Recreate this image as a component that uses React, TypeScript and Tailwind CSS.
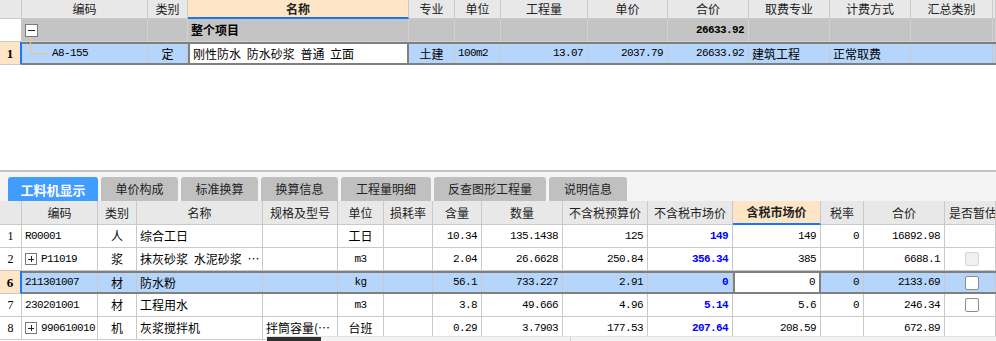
import React from "react";

const MONO = "font-['Liberation_Mono',monospace] text-[11px] tracking-[-0.6px]";

type Align = "l" | "c" | "r";

function Cell({
  children,
  a = "c",
  noB = false,
  cls = "",
}: {
  children?: React.ReactNode;
  a?: Align;
  noB?: boolean;
  cls?: string;
}) {
  const al = a === "l" ? "justify-start pl-[3px]" : a === "r" ? "justify-end pr-[4px]" : "justify-center";
  return (
    <div
      className={`flex items-center overflow-hidden whitespace-nowrap border-r border-[#c9c9c9] ${noB ? "" : "border-b"} ${al} ${cls}`}
    >
      {children}
    </div>
  );
}

const M = ({ children, cls = "" }: { children: React.ReactNode; cls?: string }) => (
  <span className={`${MONO} ${cls}`}>{children}</span>
);

const B = ({ children }: { children: React.ReactNode }) => (
  <span className="font-['Liberation_Mono',monospace] text-[11px] tracking-[-0.6px] font-bold text-[#0000ff]">{children}</span>
);

function PlusBox() {
  return (
    <span className="relative mr-[4px] inline-block h-[12px] w-[12px] shrink-0 border border-[#7a7a7a] bg-white">
      <span className="absolute left-[2px] top-[5px] h-[1px] w-[6px] bg-[#222]" />
      <span className="absolute left-[5px] top-[2px] h-[6px] w-[1px] bg-[#222]" />
    </span>
  );
}

function MinusBox() {
  return (
    <span className="relative inline-block h-[13px] w-[13px] shrink-0 border border-[#7a7a7a] bg-white">
      <span className="absolute left-[2px] top-[5px] h-[1px] w-[7px] bg-[#222]" />
    </span>
  );
}

function Check({ disabled = false }: { disabled?: boolean }) {
  return (
    <span
      className={`inline-block h-[14px] w-[14px] rounded-[2px] border ${disabled ? "border-[#d6d6d6] bg-[#f0f0f0]" : "border-[#8c8c8c] bg-white"}`}
    />
  );
}

const TOP_COLS = "grid-cols-[126px_40px_221px_46px_46px_87px_80px_81px_81px_81px_82px_1fr]";
const BOT_COLS = "grid-cols-[76px_39px_126px_75px_46px_49px_49px_81px_85px_85px_88px_43px_81px_1fr]";

function TopTable() {
  return (
    <div className="relative">
      {/* header */}
      <div className="flex h-[19px] bg-[#e8e8e8] text-[12px] text-[#222]">
        <div className="w-[22px] shrink-0 border-r border-b border-[#c9c9c9]" />
        <div className={`grid flex-1 ${TOP_COLS}`}>
          <Cell>编码</Cell>
          <Cell>类别</Cell>
          <Cell cls="bg-[#fde5c6] font-bold border-b-2 border-b-[#1677ff]">名称</Cell>
          <Cell>专业</Cell>
          <Cell>单位</Cell>
          <Cell>工程量</Cell>
          <Cell>单价</Cell>
          <Cell>合价</Cell>
          <Cell>取费专业</Cell>
          <Cell>计费方式</Cell>
          <Cell>汇总类别</Cell>
          <Cell />
        </div>
      </div>
      {/* group row */}
      <div className="flex h-[23px] text-[12px] text-black">
        <div className="w-[22px] shrink-0 border-r border-b border-[#c9c9c9] bg-white" />
        <div className={`grid flex-1 bg-[#c4c4c4] ${TOP_COLS}`}>
          <Cell a="l" cls="border-[#d2d2d2] pl-[2px]">
            <MinusBox />
          </Cell>
          <Cell cls="border-[#d2d2d2]" />
          <Cell a="l" cls="border-[#d2d2d2] font-bold">整个项目</Cell>
          <Cell cls="border-[#d2d2d2]" />
          <Cell cls="border-[#d2d2d2]" />
          <Cell cls="border-[#d2d2d2]" />
          <Cell cls="border-[#d2d2d2]" />
          <Cell a="r" cls="border-[#d2d2d2]">
            <span className="font-['Liberation_Mono',monospace] text-[11px] tracking-[-0.6px] font-bold">26633.92</span>
          </Cell>
          <Cell cls="border-[#d2d2d2]" />
          <Cell cls="border-[#d2d2d2]" />
          <Cell cls="border-[#d2d2d2]" />
          <Cell cls="border-[#d2d2d2]" />
        </div>
      </div>
      {/* row 1 selected */}
      <div className="flex h-[23px] text-[12px] text-black">
        <div className="flex w-[22px] shrink-0 items-center justify-center border-b border-r-2 border-[#c9c9c9] border-r-[#1677ff] bg-[#fde5c6] font-['Liberation_Serif',serif] text-[13px] font-bold">
          1
        </div>
        <div className={`grid flex-1 border-y-2 border-[#7f7f7f] bg-[#b5d5fb] ${TOP_COLS}`}>
          <Cell a="l" noB cls="pl-[30px]">
            <M>A8-155</M>
          </Cell>
          <Cell noB>定</Cell>
          <Cell a="l" noB cls="bg-white border-l-2 border-l-[#808080] border-r-2 border-r-[#808080] pl-[1px] [word-spacing:3px]">
            刚性防水 防水砂浆 普通 立面
          </Cell>
          <Cell noB>土建</Cell>
          <Cell a="l" noB>
            <M>100m2</M>
          </Cell>
          <Cell a="r" noB>
            <M>13.07</M>
          </Cell>
          <Cell a="r" noB>
            <M>2037.79</M>
          </Cell>
          <Cell a="r" noB>
            <M>26633.92</M>
          </Cell>
          <Cell a="l" noB>建筑工程</Cell>
          <Cell a="l" noB>正常取费</Cell>
          <Cell noB />
          <Cell noB />
        </div>
      </div>
      {/* tree connector */}
      <div className="absolute left-[30px] top-[37px] h-[16px] w-[1px] bg-[#f5c07c]" />
      <div className="absolute left-[30px] top-[53px] h-[1px] w-[19px] bg-[#f5c07c]" />
    </div>
  );
}

type Row = {
  n: string;
  code: string;
  plus?: boolean;
  type: string;
  name: string;
  spec?: string;
  unit: string;
  unitMono?: boolean;
  hl: string;
  sl: string;
  ys: string;
  sc: string;
  hs: string;
  rate: string;
  total: string;
  check?: "none" | "dis" | "on";
  sel?: boolean;
};

const rows: Row[] = [
  { n: "1", code: "R00001", type: "人", name: "综合工日", unit: "工日", hl: "10.34", sl: "135.1438", ys: "125", sc: "149", hs: "149", rate: "0", total: "16892.98", check: "none" },
  { n: "2", code: "P11019", plus: true, type: "浆", name: "抹灰砂浆 水泥砂浆 …", unit: "m3", unitMono: true, hl: "2.04", sl: "26.6628", ys: "250.84", sc: "356.34", hs: "385", rate: "", total: "6688.1", check: "dis" },
  { n: "6", code: "211301007", type: "材", name: "防水粉", unit: "kg", unitMono: true, hl: "56.1", sl: "733.227", ys: "2.91", sc: "0", hs: "0", rate: "0", total: "2133.69", check: "on", sel: true },
  { n: "7", code: "230201001", type: "材", name: "工程用水", unit: "m3", unitMono: true, hl: "3.8", sl: "49.666", ys: "4.96", sc: "5.14", hs: "5.6", rate: "0", total: "246.34", check: "on" },
  { n: "8", code: "990610010", plus: true, type: "机", name: "灰浆搅拌机", spec: "拌筒容量(…", unit: "台班", hl: "0.29", sl: "3.7903", ys: "177.53", sc: "207.64", hs: "208.59", rate: "", total: "672.89", check: "none" },
];

function BottomTable() {
  return (
    <div>
      <div className="flex h-[24px] bg-[#e8e8e8] text-[12px] text-[#222]">
        <div className="w-[22px] shrink-0 border-r border-b border-[#c9c9c9]" />
        <div className={`grid flex-1 ${BOT_COLS}`}>
          <Cell>编码</Cell>
          <Cell>类别</Cell>
          <Cell>名称</Cell>
          <Cell>规格及型号</Cell>
          <Cell>单位</Cell>
          <Cell>损耗率</Cell>
          <Cell>含量</Cell>
          <Cell>数量</Cell>
          <Cell>不含税预算价</Cell>
          <Cell>不含税市场价</Cell>
          <Cell cls="bg-[#fde5c6] font-bold border-b-2 border-b-[#1677ff]">含税市场价</Cell>
          <Cell>税率</Cell>
          <Cell>合价</Cell>
          <Cell a="l" cls="pl-[4px]">是否暂估</Cell>
        </div>
      </div>
      {rows.map((r) => {
        const s = !!r.sel;
        return (
          <div key={r.n} className="flex h-[23px] text-[12px] text-black">
            <div
              className={`flex w-[22px] shrink-0 items-center justify-center border-b border-[#c9c9c9] font-['Liberation_Serif',serif] ${s ? "border-r-2 border-r-[#1677ff] bg-[#fde5c6] text-[13px] font-bold" : "border-r bg-white text-[12px]"}`}
            >
              {r.n}
            </div>
            <div className={`grid flex-1 ${BOT_COLS} ${s ? "border-y-2 border-[#7f7f7f] bg-[#b5d5fb]" : "bg-white"}`}>
              <Cell a="l" noB={s} cls="pl-[2px]">
                {r.plus && <PlusBox />}
                <M>{r.code}</M>
              </Cell>
              <Cell noB={s}>{r.type}</Cell>
              <Cell a="l" noB={s} cls="pl-[2px] [word-spacing:3px]">{r.name}</Cell>
              <Cell a="l" noB={s} cls="pl-[2px]">{r.spec ?? ""}</Cell>
              <Cell noB={s}>{r.unitMono ? <M>{r.unit}</M> : r.unit}</Cell>
              <Cell noB={s} />
              <Cell a="r" noB={s}>
                <M>{r.hl}</M>
              </Cell>
              <Cell a="r" noB={s}>
                <M>{r.sl}</M>
              </Cell>
              <Cell a="r" noB={s}>
                <M>{r.ys}</M>
              </Cell>
              <Cell a="r" noB={s}>
                <B>{r.sc}</B>
              </Cell>
              <Cell
                a="r"
                noB={s}
                cls={s ? "bg-white border-l-2 border-l-[#808080] border-r-2 border-r-[#808080]" : ""}
              >
                <M>{r.hs}</M>
              </Cell>
              <Cell a="r" noB={s}>
                <M>{r.rate}</M>
              </Cell>
              <Cell a="r" noB={s}>
                <M>{r.total}</M>
              </Cell>
              <Cell a="l" noB={s} cls="pl-[20px]">
                {r.check === "dis" && <Check disabled />}
                {r.check === "on" && <Check />}
              </Cell>
            </div>
          </div>
        );
      })}
    </div>
  );
}

const tabs = [
  { t: "工料机显示", w: "w-[90px]", active: true },
  { t: "单价构成", w: "w-[77px]" },
  { t: "标准换算", w: "w-[77px]" },
  { t: "换算信息", w: "w-[77px]" },
  { t: "工程量明细", w: "w-[90px]" },
  { t: "反查图形工程量", w: "w-[112px]" },
  { t: "说明信息", w: "w-[78px]" },
];

export default function App() {
  return (
    <div className="relative h-[341px] w-[996px] overflow-hidden bg-white font-['Noto_Sans_CJK_SC','Noto_Sans',sans-serif] leading-none">
      <TopTable />
      <div className="h-[105px]" />
      <div className="h-[2px] bg-[#c2c2c2]" />
      <div className="flex h-[29px] items-end gap-[3px] bg-[#f4f4f4] pl-[8px]">
        {tabs.map((t) => (
          <div
            key={t.t}
            className={`flex h-[24px] items-center justify-center rounded-t-[3px] ${t.w} ${t.active ? "bg-[#409cff] text-[13px] font-bold text-white" : "bg-[#c0c0c0] text-[12px] text-[#222]"}`}
          >
            {t.t}
          </div>
        ))}
      </div>
      <BottomTable />
      {/* horizontal scrollbar overlay */}
      <div className="absolute bottom-0 left-[266px] right-0 h-[5px] border-t border-[#e2e2e2] bg-[#f3f3f3]">
        <div className="absolute left-[1px] top-0 h-[4px] w-[54px] bg-[#2e2e2e]" />
        <div className="absolute left-[304px] top-0 h-[4px] w-[1px] bg-[#cfcfcf]" />
      </div>
    </div>
  );
}
